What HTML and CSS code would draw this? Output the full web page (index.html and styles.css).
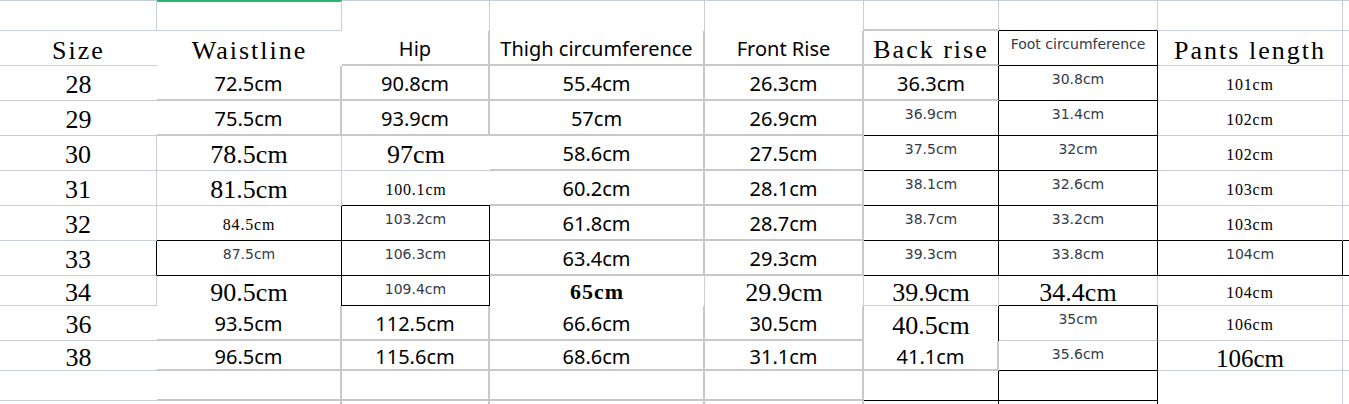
FILE: index.html
```html
<!DOCTYPE html>
<html lang="en">
<head>
<meta charset="utf-8">
<title>Size chart</title>
<link rel="stylesheet" href="styles.css">
</head>
<body>
<div class="sheet">
  <!-- row 0 -->
  <div class="c tL rL bL"></div>
  <div class="c tGreen rL bL"></div>
  <div class="c tL rL"></div>
  <div class="c tL rL"></div>
  <div class="c tL rL"></div>
  <div class="c tL rL bG"></div>
  <div class="c tL rL bK"></div>
  <div class="c tL rL bL"></div>
  <div class="c tL bL"></div>
  <!-- header -->
  <div class="c hd bL">Size</div>
  <div class="c hd">Waistline</div>
  <div class="c sn rG bG">Hip</div>
  <div class="c sn rG bG">Thigh circumference</div>
  <div class="c sn rG bG">Front Rise</div>
  <div class="c hd rK bG">Back rise</div>
  <div class="c sm rK bK">Foot circumference</div>
  <div class="c hd rL bL">Pants length</div>
  <div class="c bL"></div>
  <!-- 28 -->
  <div class="c sf bL">28</div>
  <div class="c sn rG bG">72.5cm</div>
  <div class="c sn rG bG">90.8cm</div>
  <div class="c sn rG bG">55.4cm</div>
  <div class="c sn rG bG">26.3cm</div>
  <div class="c sn rK bG">36.3cm</div>
  <div class="c sm rK bK">30.8cm</div>
  <div class="c ss rL bL">101cm</div>
  <div class="c bL"></div>
  <!-- 29 -->
  <div class="c sf bL">29</div>
  <div class="c sn rG bG">75.5cm</div>
  <div class="c sn rG bG">93.9cm</div>
  <div class="c sn rG bG">57cm</div>
  <div class="c sn rG bG">26.9cm</div>
  <div class="c sm rK bK">36.9cm</div>
  <div class="c sm rK bK">31.4cm</div>
  <div class="c ss rL bL">102cm</div>
  <div class="c bL"></div>
  <!-- 30 -->
  <div class="c sf rL bL">30</div>
  <div class="c sf rL bL">78.5cm</div>
  <div class="c sf bL">97cm</div>
  <div class="c sn rG bG">58.6cm</div>
  <div class="c sn rG bG">27.5cm</div>
  <div class="c sm rK bK">37.5cm</div>
  <div class="c sm rK bK">32cm</div>
  <div class="c ss rL bL">102cm</div>
  <div class="c bL"></div>
  <!-- 31 -->
  <div class="c sf rL bL">31</div>
  <div class="c sf rL bL">81.5cm</div>
  <div class="c ss bK">100.1cm</div>
  <div class="c sn rG bG">60.2cm</div>
  <div class="c sn rG bG">28.1cm</div>
  <div class="c sm rK bK">38.1cm</div>
  <div class="c sm rK bK">32.6cm</div>
  <div class="c ss rL bL">103cm</div>
  <div class="c bL"></div>
  <!-- 32 -->
  <div class="c sf rL bL">32</div>
  <div class="c ss rK bK">84.5cm</div>
  <div class="c sm rK bK">103.2cm</div>
  <div class="c sn rG bG">61.8cm</div>
  <div class="c sn rG bG">28.7cm</div>
  <div class="c sm rK bK">38.7cm</div>
  <div class="c sm rK bK">33.2cm</div>
  <div class="c ss rL bK">103cm</div>
  <div class="c bK"></div>
  <!-- 33 -->
  <div class="c sf rK bL">33</div>
  <div class="c sm rK bK">87.5cm</div>
  <div class="c sm rK bK">106.3cm</div>
  <div class="c sn rG bG">63.4cm</div>
  <div class="c sn rG bG">29.3cm</div>
  <div class="c sm rK bK">39.3cm</div>
  <div class="c sm rK bK">33.8cm</div>
  <div class="c sm rK bK">104cm</div>
  <div class="c bK"></div>
  <!-- 34 -->
  <div class="c sf rL bL">34</div>
  <div class="c sf rK">90.5cm</div>
  <div class="c sm rK bK">109.4cm</div>
  <div class="c sb rL">65cm</div>
  <div class="c sf rL">29.9cm</div>
  <div class="c sf rL bL">39.9cm</div>
  <div class="c sf rL bK">34.4cm</div>
  <div class="c ss rL bL">104cm</div>
  <div class="c bL"></div>
  <!-- 36 -->
  <div class="c sf bL">36</div>
  <div class="c sn rG bG">93.5cm</div>
  <div class="c sn rG bG">112.5cm</div>
  <div class="c sn rG bG">66.6cm</div>
  <div class="c sn rG bG">30.5cm</div>
  <div class="c sf rK">40.5cm</div>
  <div class="c sm rK bL">35cm</div>
  <div class="c ss rL bL">106cm</div>
  <div class="c bL"></div>
  <!-- 38 -->
  <div class="c sf bL">38</div>
  <div class="c sn rG bG">96.5cm</div>
  <div class="c sn rG bG">115.6cm</div>
  <div class="c sn rG bG">68.6cm</div>
  <div class="c sn rG bG">31.1cm</div>
  <div class="c sn rG bG">41.1cm</div>
  <div class="c sm rK bK">35.6cm</div>
  <div class="c sf big rL bL">106cm</div>
  <div class="c bL"></div>
  <!-- empty -->
  <div class="c bL"></div>
  <div class="c rG bG"></div>
  <div class="c rG bG"></div>
  <div class="c rG bG"></div>
  <div class="c rG bG"></div>
  <div class="c rK bK"></div>
  <div class="c rK bK"></div>
  <div class="c rL"></div>
  <div class="c"></div>
  <!-- tail -->
  <div class="c"></div>
  <div class="c rG"></div>
  <div class="c rG"></div>
  <div class="c rG"></div>
  <div class="c rG"></div>
  <div class="c rK"></div>
  <div class="c rK"></div>
  <div class="c rL"></div>
  <div class="c"></div>
</div>
</body>
</html>
```

FILE: styles.css
```css
:root {
  --grid: #c9cedd;
  --gray: #c8c8c8;
  --ink: #000;
  --soft: #343a48;
}

html, body {
  margin: 0;
  padding: 0;
  background: #fff;
  overflow: hidden;
}

.sheet {
  display: grid;
  grid-template-columns: 157px 185px 148px 215px 159px 135px 159px 185px 6px;
  grid-template-rows: 31px 35px 35px 35px 35px 35px 35px 35px 30px 35px 30px 30px 3px;
  width: 1349px;
  height: 404px;
  overflow: hidden;
}

.c {
  box-sizing: border-box;
  display: flex;
  justify-content: center;
  align-items: center;
  white-space: nowrap;
  color: var(--ink);
  background: #fff;
  min-width: 0;
}

/* borders */
.tL { border-top: 1px solid var(--grid); }
.tGreen { border-top: 2px solid #2bb673; }
.rL { border-right: 1px solid var(--grid); }
.rG { border-right: 2px solid var(--gray); }
.rK { border-right: 1px solid #000; }
.bL { border-bottom: 1px solid var(--grid); }
.bG { border-bottom: 2px solid var(--gray); }
.bK { border-bottom: 1px solid #000; }

/* text styles */
.hd {
  font-family: "Liberation Serif", serif;
  font-size: 26px;
  letter-spacing: 2px;
  padding-top: 5px;
}

.sf {
  font-family: "Liberation Serif", serif;
  font-size: 26px;
  padding-top: 4px;
}

.sf.big {
  font-size: 25px;
  padding-top: 6px;
}

.ss {
  font-family: "Liberation Serif", serif;
  font-size: 16px;
  letter-spacing: 0.8px;
  padding-top: 4px;
}

.sb {
  font-family: "Liberation Serif", serif;
  font-size: 22px;
  font-weight: bold;
  letter-spacing: 1px;
  padding-top: 2px;
}

.sn {
  font-family: "Noto Sans", sans-serif;
  font-size: 20px;
  padding-top: 2px;
}

.sm {
  font-family: "DejaVu Sans", sans-serif;
  font-size: 14px;
  color: var(--soft);
  align-items: flex-start;
  padding-top: 5px;
}
```
